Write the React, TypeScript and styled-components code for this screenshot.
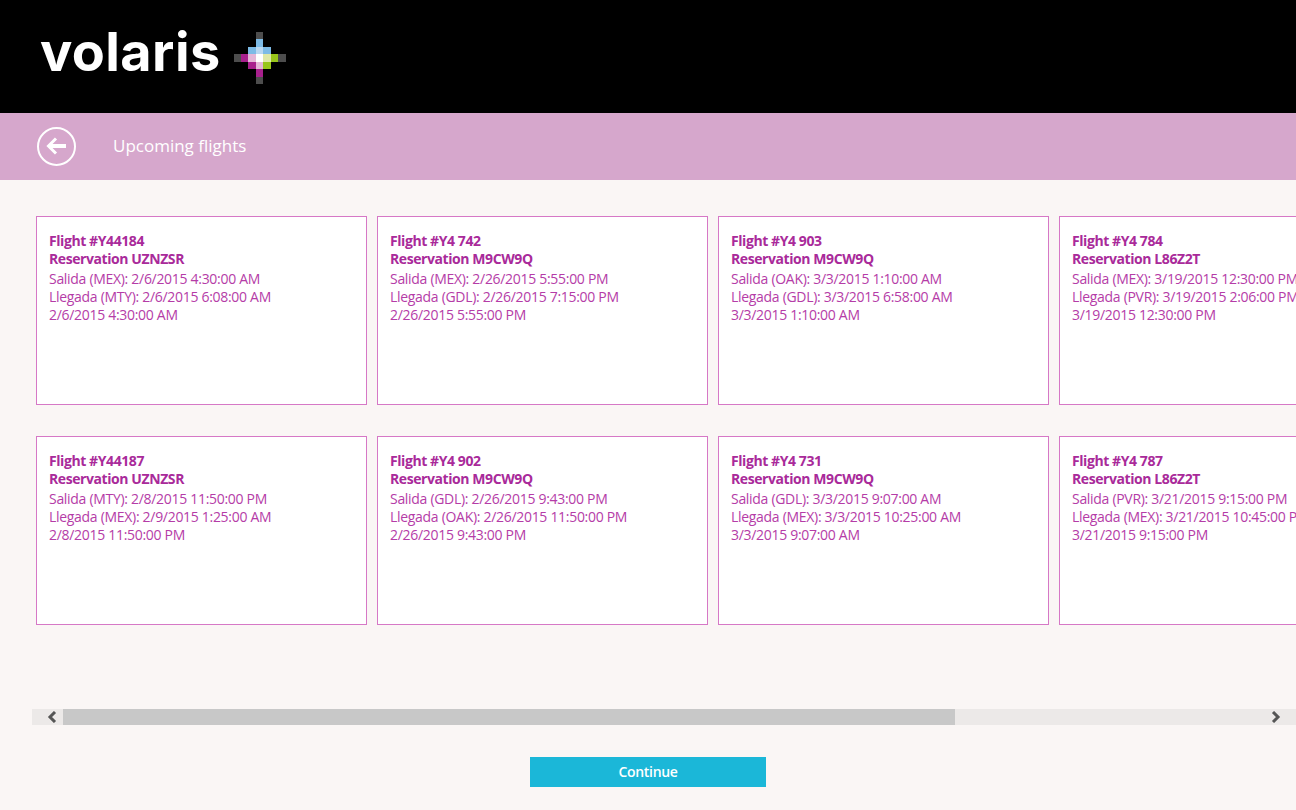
import * as React from "react"
import styled, { createGlobalStyle } from "styled-components"

type Flight = {
  number: string
  reservation: string
  departure: string
  arrival: string
  date: string
}

const flights: Flight[] = [
  { number: "Y44184", reservation: "UZNZSR", departure: "Salida (MEX): 2/6/2015 4:30:00 AM", arrival: "Llegada (MTY): 2/6/2015 6:08:00 AM", date: "2/6/2015 4:30:00 AM" },
  { number: "Y44187", reservation: "UZNZSR", departure: "Salida (MTY): 2/8/2015 11:50:00 PM", arrival: "Llegada (MEX): 2/9/2015 1:25:00 AM", date: "2/8/2015 11:50:00 PM" },
  { number: "Y4 742", reservation: "M9CW9Q", departure: "Salida (MEX): 2/26/2015 5:55:00 PM", arrival: "Llegada (GDL): 2/26/2015 7:15:00 PM", date: "2/26/2015 5:55:00 PM" },
  { number: "Y4 902", reservation: "M9CW9Q", departure: "Salida (GDL): 2/26/2015 9:43:00 PM", arrival: "Llegada (OAK): 2/26/2015 11:50:00 PM", date: "2/26/2015 9:43:00 PM" },
  { number: "Y4 903", reservation: "M9CW9Q", departure: "Salida (OAK): 3/3/2015 1:10:00 AM", arrival: "Llegada (GDL): 3/3/2015 6:58:00 AM", date: "3/3/2015 1:10:00 AM" },
  { number: "Y4 731", reservation: "M9CW9Q", departure: "Salida (GDL): 3/3/2015 9:07:00 AM", arrival: "Llegada (MEX): 3/3/2015 10:25:00 AM", date: "3/3/2015 9:07:00 AM" },
  { number: "Y4 784", reservation: "L86Z2T", departure: "Salida (MEX): 3/19/2015 12:30:00 PM", arrival: "Llegada (PVR): 3/19/2015 2:06:00 PM", date: "3/19/2015 12:30:00 PM" },
  { number: "Y4 787", reservation: "L86Z2T", departure: "Salida (PVR): 3/21/2015 9:15:00 PM", arrival: "Llegada (MEX): 3/21/2015 10:45:00 PM", date: "3/21/2015 9:15:00 PM" },
]

const g = "#4d4d4d"
const b = "#7dbbe6"
const l = "#b9d8f1"
const m = "#a8208d"
const p = "#e4b6d7"
const w = "#ffffff"
const y = "#dfe8a6"
const v = "#98c51b"

const logoCells: [number, number, string][] = [
  [3, 0, g],
  [3, 1, b],
  [2, 2, b], [3, 2, l], [4, 2, b],
  [0, 3, g], [1, 3, m], [2, 3, p], [3, 3, w], [4, 3, y], [5, 3, v], [6, 3, g],
  [2, 4, m], [3, 4, p], [4, 4, v],
  [3, 5, m],
  [3, 6, g],
]

const GlobalStyle = createGlobalStyle`
  html, body {
    margin: 0;
    padding: 0;
    height: 100%;
    overflow: hidden;
    background: #faf6f5;
    font-family: "Open Sans", "Noto Sans", sans-serif;
  }
`

const Page = styled.div`
  width: 1296px;
  height: 810px;
  display: flex;
  flex-direction: column;
  overflow: hidden;
  background: #faf6f5;
`

const Masthead = styled.header`
  height: 113px;
  flex: none;
  box-sizing: border-box;
  background: #000;
  display: flex;
  align-items: flex-start;
  padding: 32px 0 0 40px;
`

const Wordmark = styled.span`
  width: 180px;
  flex: none;
  font-family: Inter, sans-serif;
  font-weight: 700;
  font-size: 54px;
  line-height: 39px;
  color: #fff;
  letter-spacing: 0.4px;
`

const LogoMark = styled.svg`
  width: 53px;
  height: 52px;
  margin-left: 13px;
  flex: none;
`

const TitleBar = styled.div`
  height: 67px;
  flex: none;
  box-sizing: border-box;
  background: #d6a7cc;
  display: flex;
  align-items: center;
  padding: 0 0 1px 37px;
  gap: 37px;
`

const BackButton = styled.button`
  width: 39px;
  height: 39px;
  padding: 0;
  border: 2px solid #fff;
  border-radius: 50%;
  background: none;
  display: flex;
  align-items: center;
  justify-content: center;
  box-sizing: border-box;
`

const Title = styled.h1`
  margin: 0 0 1px;
  font-size: 17px;
  font-weight: 400;
  color: #fff;
`

const Content = styled.main`
  flex: 1;
  display: flex;
  flex-direction: column;
  padding-top: 36px;
  min-height: 0;
`

const CardGrid = styled.div`
  height: 409px;
  flex: none;
  padding-left: 36px;
  display: grid;
  grid-auto-flow: column;
  grid-template-rows: repeat(2, 189px);
  grid-auto-columns: 331px;
  column-gap: 10px;
  row-gap: 31px;
  overflow: hidden;
`

const Card = styled.article`
  box-sizing: border-box;
  border: 1px solid #d678c6;
  background: #fff;
  padding: 15px 0 0 12px;
  white-space: nowrap;
  overflow: hidden;
  color: #b53ca7;
  font-size: 14px;
  letter-spacing: -0.3px;
  line-height: 18px;
`

const CardHeading = styled.div`
  font-weight: 700;
  color: #a92a9a;
  letter-spacing: -0.42px;
  margin-bottom: 1.5px;
`

const ScrollBar = styled.div`
  margin: 84px 0 0 32px;
  height: 16px;
  flex: none;
  background: #ece9e8;
  display: flex;
  align-items: stretch;
`

const ScrollArrow = styled.div<{ $side: "left" | "right" }>`
  flex: none;
  display: flex;
  align-items: center;
  justify-content: center;
  ${({ $side }) =>
    $side === "right"
      ? "margin-left: auto; width: 40px;"
      : "width: 22px; padding-left: 9px;"}
`

const ScrollThumb = styled.div`
  width: 892px;
  flex: none;
  background: #c8c8c8;
`

const Footer = styled.div`
  display: flex;
  justify-content: center;
  padding-top: 32px;
`

const ContinueButton = styled.button`
  width: 236px;
  height: 30px;
  border: none;
  padding: 0 0 1px;
  background: #1bb7d8;
  color: #fff;
  font-family: inherit;
  font-size: 14px;
  font-weight: 600;
  letter-spacing: -0.3px;
`

const Chevron = ({ flip }: { flip?: boolean }) => (
  <svg width="10" height="12" viewBox="0 0 10 12">
    <path
      d={flip ? "M2 1 7 6 2 11" : "M8 1 3 6 8 11"}
      fill="none"
      stroke="#555"
      strokeWidth="3"
    />
  </svg>
)

export default function App() {
  return (
    <Page>
      <GlobalStyle />
      <Masthead>
        <Wordmark>volaris</Wordmark>
        <LogoMark viewBox="0 0 7 7" shapeRendering="crispEdges">
          {logoCells.map(([cx, cy, fill]) => (
            <rect key={`${cx}-${cy}`} x={cx} y={cy} width="1" height="1" fill={fill} />
          ))}
        </LogoMark>
      </Masthead>
      <TitleBar>
        <BackButton aria-label="Back">
          <svg width="24" height="22" viewBox="0 0 24 22">
            <path d="M11 3.5 3.5 11 11 18.5" fill="none" stroke="#fff" strokeWidth="3" />
            <path d="M5 11H21" fill="none" stroke="#fff" strokeWidth="4" />
          </svg>
        </BackButton>
        <Title>Upcoming flights</Title>
      </TitleBar>
      <Content>
        <CardGrid>
          {flights.map(flight => (
            <Card key={flight.number}>
              <CardHeading>
                Flight #{flight.number}
                <br />
                Reservation {flight.reservation}
              </CardHeading>
              <div>{flight.departure}</div>
              <div>{flight.arrival}</div>
              <div>{flight.date}</div>
            </Card>
          ))}
        </CardGrid>
        <ScrollBar>
          <ScrollArrow $side="left">
            <Chevron />
          </ScrollArrow>
          <ScrollThumb />
          <ScrollArrow $side="right">
            <Chevron flip />
          </ScrollArrow>
        </ScrollBar>
        <Footer>
          <ContinueButton>Continue</ContinueButton>
        </Footer>
      </Content>
    </Page>
  )
}
